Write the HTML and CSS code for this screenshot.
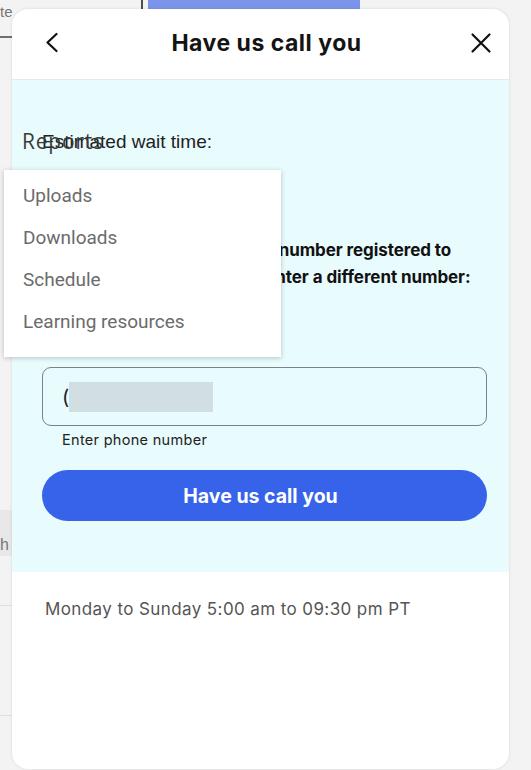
FILE: index.html
```html
<!DOCTYPE html>
<html lang="en">
<head>
<meta charset="utf-8">
<title>Have us call you</title>
<link rel="stylesheet" href="styles.css">
</head>
<body>
<div class="bg-page">
  <div class="bg-top">
    <div class="bg-crumb">te</div>
    <div class="bg-divider"></div>
    <div class="bg-tab"></div>
  </div>
  <div class="bg-side">
    <div class="bg-rule"></div>
    <div class="bg-band"><span>h</span></div>
    <div class="bg-rule light"></div>
    <div class="bg-rule light second"></div>
  </div>
</div>

<section class="modal">
  <header class="modal-head">
    <svg class="icon" viewBox="0 0 24 24" width="24" height="24" aria-hidden="true"><path d="M16.5 3 L7.5 11.5 L16.5 20" fill="none" stroke="#111" stroke-width="2.2" stroke-linecap="round" stroke-linejoin="round"/></svg>
    <h1 class="modal-title">Have us call you</h1>
    <svg class="icon" viewBox="0 0 24 24" width="24" height="24" aria-hidden="true"><path d="M3.5 3.5 L20.5 20.5 M20.5 3.5 L3.5 20.5" fill="none" stroke="#111" stroke-width="2.2" stroke-linecap="round"/></svg>
  </header>
  <div class="modal-body">
    <p class="wait">Estimated wait time:</p>
    <p class="wait-value">Less than 5 minutes</p>
    <p class="instruction">We will call you at the phone number registered to<br>your account, or you could enter a different number:</p>
    <div class="phone-field">
      <span class="paren">(</span><span class="redacted"></span>
    </div>
    <p class="helper">Enter phone number</p>
    <button class="call-btn">Have us call you</button>
  </div>
  <p class="hours">Monday to Sunday 5:00 am to 09:30 pm PT</p>
</section>

<div class="menu-group">
  <div class="menu-label">Reports</div>
  <ul class="menu">
    <li>Uploads</li>
    <li>Downloads</li>
    <li>Schedule</li>
    <li>Learning resources</li>
  </ul>
</div>
</body>
</html>
```

FILE: styles.css
```css
* { box-sizing: border-box; }
html, body { margin: 0; padding: 0; }
body {
  width: 531px;
  height: 770px;
  overflow: hidden;
  background: #f3f3f3;
  font-family: Inter, "Liberation Sans", sans-serif;
  color: #1a1a1a;
  position: relative;
}

/* background page */
.bg-page { display: flex; flex-direction: column; }
.bg-top {
  display: flex;
  height: 9px;
  align-items: stretch;
}
.bg-crumb {
  width: 141px;
  font: 15px "Liberation Sans", sans-serif;
  color: #777;
  padding-top: 4px;
  line-height: 16px;
  white-space: nowrap;
}
.bg-divider { width: 2px; background: #4f4f4f; }
.bg-tab {
  width: 212px;
  margin-left: 5px;
  background: #7b94ea;
}
.bg-side { width: 12px; display: flex; flex-direction: column; }
.bg-rule { height: 2px; background: #6f6f6f; margin-top: 27px; }
.bg-band {
  height: 46px;
  margin-top: 472px;
  background: #e8e8e8;
  font: 16px "Liberation Sans", sans-serif;
  color: #777;
  padding-top: 26px;
}
.bg-rule.light { height: 1px; background: #dedede; margin-top: 49px; }
.bg-rule.light.second { margin-top: 109px; }

/* modal */
.modal {
  position: absolute;
  left: 12px;
  top: 9px;
  width: 497px;
  height: 760px;
  background: #fff;
  border-radius: 16px;
  overflow: hidden;
  box-shadow: 0 0 3px rgba(0,0,0,0.12);
  display: flex;
  flex-direction: column;
}
.modal-head {
  height: 71px;
  flex: none;
  display: flex;
  align-items: center;
  padding: 0 16px 2px 28px;
  border-bottom: 1px solid #e6e9ea;
}
.icon { flex: none; display: block; }
.modal-title {
  flex: 1;
  margin: 0;
  text-align: center;
  font-size: 23px;
  font-weight: 700;
  letter-spacing: 0.5px;
  color: #141414;
}
.modal-body {
  background: #e8fbfd;
  height: 492px;
  flex: none;
  padding: 50px 22px 0 30px;
  display: flex;
  flex-direction: column;
}
.wait {
  margin: 0;
  font: 19px "Liberation Sans", Arial, sans-serif;
  line-height: 24px;
  color: #222;
}
.wait-value {
  margin: 20px 0 0;
  font: 700 18px "Liberation Sans", Arial, sans-serif;
  line-height: 24px;
}
.instruction {
  margin: 39px 0 0;
  font-size: 17px;
  font-weight: 700;
  line-height: 27px;
  color: #111;
  letter-spacing: -0.08px;
  white-space: nowrap;
}
.phone-field {
  margin-top: 76px;
  height: 59px;
  border: 1px solid #7c8285;
  border-radius: 9px;
  display: flex;
  align-items: center;
  padding-left: 19px;
}
.paren { font-size: 20px; color: #222; }
.redacted {
  width: 144px;
  height: 30px;
  background: #d2dfe2;
}
.helper {
  margin: 4px 0 0 20px;
  font-size: 14.5px;
  line-height: 20px;
  color: #222;
  letter-spacing: 0.3px;
}
.call-btn {
  margin-top: 20px;
  height: 51px;
  border: none;
  border-radius: 26px;
  background: #3763ea;
  color: #fff;
  font-family: Inter, "Liberation Sans", sans-serif;
  font-size: 19.5px;
  font-weight: 700;
  letter-spacing: 0;
  padding: 0 8px 0 0;
}
.hours {
  margin: 25px 0 0 33px;
  font-size: 17px;
  line-height: 24px;
  color: #555;
  letter-spacing: 0.4px;
}

/* dropdown overlay */
.menu-group {
  position: absolute;
  left: 4px;
  top: 129px;
  width: 277px;
}
.menu-label {
  margin-left: 18px;
  font: 21px "Open Sans", sans-serif;
  letter-spacing: 0.8px;
  line-height: 24px;
  color: #3a3a3a;
  height: 41px;
}
.menu {
  list-style: none;
  margin: 0;
  padding: 5px 0 14px;
  background: #fff;
  box-shadow: 0 1px 5px rgba(0,0,0,0.22);
  font: 19px Roboto, sans-serif;
  color: #6b6b6b;
}
.menu li {
  line-height: 42px;
  padding-left: 19px;
}
```
